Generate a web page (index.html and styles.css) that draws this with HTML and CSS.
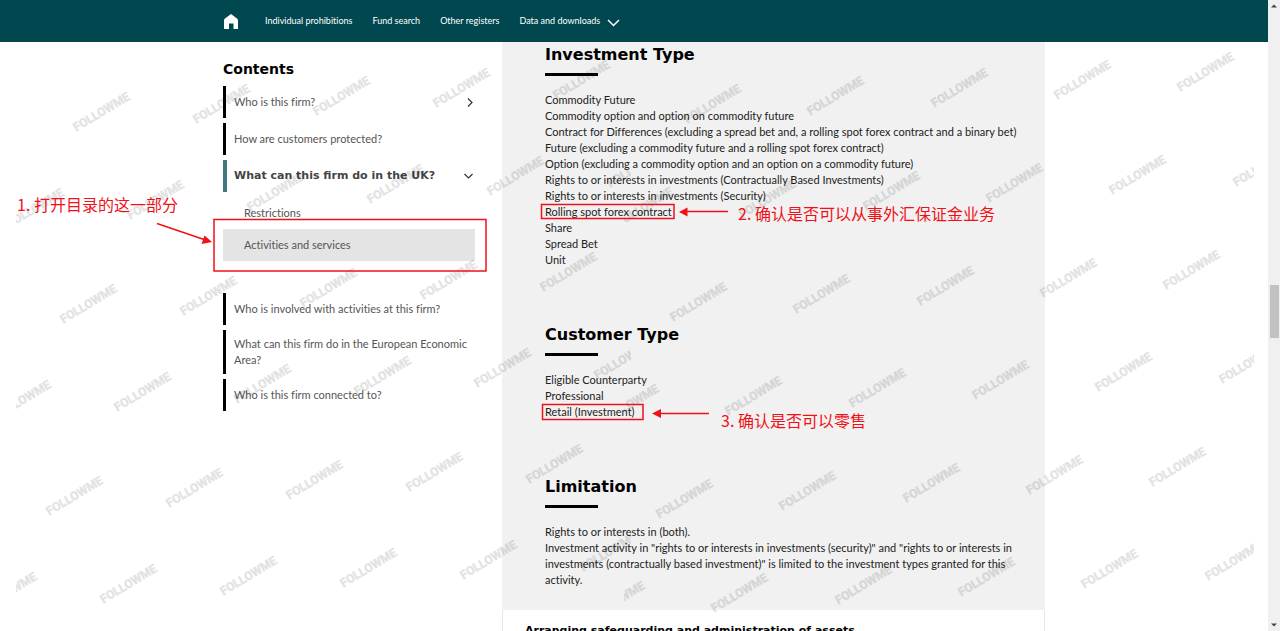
FILE: index.html
```html
<!DOCTYPE html>
<html lang="en">
<head>
<meta charset="utf-8">
<title>Firm register – Activities and services</title>
<link rel="stylesheet" href="styles.css">
</head>
<body>
<div class="page">
  <header class="topbar">
    <nav class="wrap nav" aria-label="Main">
      <a class="home" href="#" aria-label="Home">
        <svg width="14" height="15" viewBox="0 0 14 15"><path d="M7 0 13 4.500Q14 5.200 14 6.500V15H9.500V9.500H5V15H0V6.500Q0 5.200 1 4.500Z" fill="#fff"/></svg>
      </a>
      <a href="#">Individual prohibitions</a>
      <a href="#">Fund search</a>
      <a href="#">Other registers</a>
      <a class="has-menu" href="#">Data and downloads
        <svg width="13" height="8" viewBox="0 0 13 8"><path d="M1 1 6.500 6.500 12 1" fill="none" stroke="#fff" stroke-width="1.500"/></svg>
      </a>
    </nav>
  </header>

  <div class="wrap columns">
    <aside class="sidebar">
      <h2 class="contents">Contents</h2>
      <nav class="toc" aria-label="Contents">
        <a class="item" href="#">Who is this firm?
          <svg width="6" height="9" viewBox="0 0 6 9"><path d="M1 .5 5 4.500 1 8.500" fill="none" stroke="#333" stroke-width="1.200"/></svg>
        </a>
        <a class="item" href="#">How are customers protected?</a>
        <a class="item open" href="#">What can this firm do in the UK?
          <svg width="9" height="6" viewBox="0 0 9 6"><path d="M.5 1 4.500 5 8.500 1" fill="none" stroke="#333" stroke-width="1.200"/></svg>
        </a>
        <div class="sub">
          <a href="#">Restrictions</a>
          <a class="current" href="#" aria-current="page">Activities and services</a>
        </div>
        <a class="item" href="#">Who is involved with activities at this firm?</a>
        <a class="item" href="#">What can this firm do in the European Economic Area?</a>
        <a class="item" href="#">Who is this firm connected to?</a>
      </nav>
    </aside>

    <main class="main">
      <div class="panel">
        <section class="block">
          <h2>Investment Type</h2>
          <ul>
            <li>Commodity Future</li>
            <li>Commodity option and option on commodity future</li>
            <li>Contract for Differences (excluding a spread bet and, a rolling spot forex contract and a binary bet)</li>
            <li>Future (excluding a commodity future and a rolling spot forex contract)</li>
            <li>Option (excluding a commodity option and an option on a commodity future)</li>
            <li>Rights to or interests in investments (Contractually Based Investments)</li>
            <li>Rights to or interests in investments (Security)</li>
            <li>Rolling spot forex contract</li>
            <li>Share</li>
            <li>Spread Bet</li>
            <li>Unit</li>
          </ul>
        </section>
        <section class="block">
          <h2>Customer Type</h2>
          <ul>
            <li>Eligible Counterparty</li>
            <li>Professional</li>
            <li>Retail (Investment)</li>
          </ul>
        </section>
        <section class="block">
          <h2>Limitation</h2>
          <ul>
            <li>Rights to or interests in (both).</li>
            <li>Investment activity in "rights to or interests in investments (security)" and "rights to or interests in investments (contractually based investment)" is limited to the investment types granted for this activity.</li>
          </ul>
        </section>
      </div>
      <section class="next">
        <h3>Arranging safeguarding and administration of assets</h3>
      </section>
    </main>

    <div class="notes">
      <svg class="arrows" width="822" height="589" viewBox="223 42 822 589">
        <g fill="none" stroke="#f01018" stroke-width="1.500">
          <rect x="214" y="219.500" width="272" height="51.500"/>
          <rect x="541.500" y="204.500" width="132.500" height="14"/>
          <rect x="542.500" y="404.500" width="100.500" height="15"/>
          <path d="M157 223.500 204 239.500M728 211.500H686M709 413.500H660"/>
        </g>
        <g fill="#f01018">
          <path d="M212 242 201.500 244 204.500 235.500Z"/>
          <path d="M679 212 687.500 207.500V216.500Z"/>
          <path d="M652 413.500 661 409V418Z"/>
        </g>
      </svg>
      <span class="note n1">1. 打开目录的这一部分</span>
      <span class="note n2">2. 确认是否可以从事外汇保证金业务</span>
      <span class="note n3">3. 确认是否可以零售</span>
    </div>
  </div>

  <svg class="watermark" width="1280" height="631" viewBox="0 0 1280 631" aria-hidden="true">
    <defs>
      <clipPath id="tileL"><rect x="16" y="42" width="615" height="589"/></clipPath>
      <clipPath id="tileR"><rect x="624" y="42" width="630" height="589"/></clipPath>
      <text id="wm" text-anchor="middle" y="5" transform="rotate(-31)">FOLLOWME</text>
      <g id="rowL">
        <use href="#wm"/><use href="#wm" x="120" y="-8"/><use href="#wm" x="240" y="-16"/><use href="#wm" x="360" y="-24"/><use href="#wm" x="480" y="-32"/><use href="#wm" x="600" y="-40"/>
      </g>
      <g id="rowR">
        <use href="#wm"/><use href="#wm" x="123" y="-8"/><use href="#wm" x="247" y="-16"/><use href="#wm" x="370" y="-24"/><use href="#wm" x="493" y="-32"/><use href="#wm" x="617" y="-40"/>
      </g>
    </defs>
    <g clip-path="url(#tileL)">
      <use href="#rowL" x="101" y="111"/>
      <use href="#rowL" x="35" y="207"/>
      <use href="#rowL" x="88" y="303"/>
      <use href="#rowL" x="22" y="399"/>
      <use href="#rowL" x="74" y="495"/>
      <use href="#rowL" x="8" y="591"/>
    </g>
    <g clip-path="url(#tileR)">
      <use href="#rowR" x="712" y="103"/>
      <use href="#rowR" x="644" y="206"/>
      <use href="#rowR" x="698" y="301"/>
      <use href="#rowR" x="630" y="403"/>
      <use href="#rowR" x="684" y="498"/>
      <use href="#rowR" x="616" y="600"/>
    </g>
  </svg>
</div>
<div class="scrollbar" aria-hidden="true">
  <svg width="6" height="4" viewBox="0 0 6 4"><path d="M0 3.500 3 .5 6 3.500Z" fill="#444"/></svg>
  <div class="thumb"></div>
  <svg width="6" height="4" viewBox="0 0 6 4"><path d="M0 .5 3 3.500 6 .5Z" fill="#444"/></svg>
</div>
</body>
</html>
```
FILE: styles.css
```css
* { box-sizing: border-box; }
body {
  margin: 0;
  display: flex;
  height: 100vh;
  overflow: hidden;
  background: #fff;
  color: #222;
  font: 11px/16px Lato, "Liberation Sans", sans-serif;
  font-variant-ligatures: none;
}
a { color: inherit; text-decoration: none; }
h2, h3, ul { margin: 0; padding: 0; }
ul { list-style: none; }
svg { flex: none; }

.page { position: relative; flex: 1; min-width: 0; overflow: hidden; }
.wrap { width: 100%; max-width: 822px; margin: 0 auto; }

.topbar { background: #00474f; color: #fff; }
.nav { display: flex; align-items: center; gap: 20px; height: 42px; padding-left: 1px; font-size: 9px; }
.home { display: flex; margin-right: 7px; }
.has-menu { display: flex; align-items: center; gap: 7px; }
.has-menu svg { margin-top: 4px; }

.columns { position: relative; display: flex; gap: 27px; }
.sidebar { flex: 0 0 252px; padding-top: 18px; color: #555; }
.contents {
  margin-bottom: 8px;
  color: #000;
  font: bold 14px/18px "DejaVu Sans", sans-serif;
}
.toc { display: flex; flex-direction: column; gap: 5px; }
.item {
  display: flex;
  align-items: center;
  justify-content: space-between;
  min-height: 32px;
  padding: 6px 2px 6px 8px;
  border-left: 3px solid #000;
}
.item.open {
  padding-left: 7px;
  border-left: 4px solid #43777b;
  color: #444;
  font: bold 11px/16px "DejaVu Sans", sans-serif;
}
.sub { margin-bottom: 27px; }
.sub a { display: block; padding: 8px 21px; }
.sub .current { background: #e4e4e4; }

.main { flex: 1; min-width: 0; }
.panel { padding: 1px 22px 22px 43px; background: #f1f1f1; }
.block + .block { margin-top: 55px; }
.block h2 {
  margin-bottom: 16px;
  color: #000;
  font: bold 16px/24px "DejaVu Sans", sans-serif;
}
.block h2::after {
  content: "";
  display: block;
  width: 53px;
  height: 3px;
  margin-top: 6px;
  background: #000;
}
.next { padding: 13px 22px; border: solid #e6e6e6; border-width: 0 1px; }
.next h3 { color: #000; font: bold 11px/16px "DejaVu Sans", sans-serif; }

.notes { position: absolute; top: 0; left: 0; z-index: 2; pointer-events: none; }
.arrows { display: block; overflow: visible; }
.note {
  position: absolute;
  color: #f01018;
  font: 16px/24px "Noto Sans CJK SC", sans-serif;
  white-space: nowrap;
}
.n1 { left: -206px; top: 150px; }
.n2 { left: 515px; top: 159px; }
.n3 { left: 498px; top: 366px; }

.watermark {
  position: absolute;
  top: 0;
  left: 0;
  fill: #000;
  stroke: #000;
  stroke-width: .5px;
  opacity: .11;
  font: bold 12px Roboto, sans-serif;
  pointer-events: none;
}

.scrollbar {
  display: flex;
  flex: 0 0 12px;
  flex-direction: column;
  align-items: center;
  justify-content: space-between;
  padding: 4px 0;
  background: #f0f0f0;
}
.thumb { width: 9px; height: 53px; margin-bottom: 8px; background: #c1c1c1; }
```
